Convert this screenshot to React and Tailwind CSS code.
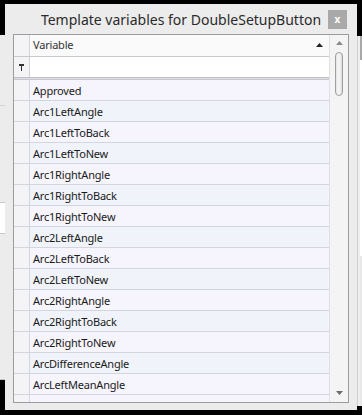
import React from "react";

const rows = [
  "Approved",
  "Arc1LeftAngle",
  "Arc1LeftToBack",
  "Arc1LeftToNew",
  "Arc1RightAngle",
  "Arc1RightToBack",
  "Arc1RightToNew",
  "Arc2LeftAngle",
  "Arc2LeftToBack",
  "Arc2LeftToNew",
  "Arc2RightAngle",
  "Arc2RightToBack",
  "Arc2RightToNew",
  "ArcDifferenceAngle",
  "ArcLeftMeanAngle",
];

const font = { fontFamily: '"Noto Sans", "Open Sans", Arial, sans-serif' };

export default function App() {
  return (
    <div className="relative w-[362px] h-[415px] bg-black overflow-hidden" style={font}>
      {/* windows behind */}
      <div className="absolute left-0 top-[35px] w-[5px] h-[345px] bg-[#ececec] border-b border-[#c8c8c8]">
        <div className="mt-[70px] h-px bg-[#d4d4d4]" />
        <div className="mt-[96px] h-[32px] border-y border-[#c8c8c8] bg-white" />
      </div>
      <div className="absolute left-[357px] top-[36px] w-[5px] h-[370px] bg-[#e4e4e4] flex">
        <div className="w-px h-full bg-[#d0d0d0]" />
        <div className="w-[2px] h-full bg-[#efefef]" />
        <div className="w-[2px] h-full flex flex-col">
          <div className="h-[24px] bg-[#a8a8a8]" />
          <div className="flex-1 bg-white" />
          <div className="h-[150px] bg-[#e8e8e8]" />
        </div>
      </div>

      {/* dialog */}
      <div className="absolute left-[5px] top-[4px] w-[352px] h-[406px] bg-[#ececec] flex flex-col">
        <div className="relative h-[30px] flex items-center justify-center">
          <span className="text-[14px] leading-none text-[#2b2b2b] mt-[1px]">
            Template variables for DoubleSetupButton
          </span>
          <div className="absolute left-[323px] top-[6px] w-[19px] h-[19px] bg-[#a9a9a9] flex items-center justify-center">
            <span className="text-white text-[10px] font-bold leading-none mt-[-2px]">x</span>
          </div>
        </div>

        {/* grid */}
        <div className="mx-[8px] h-[369px] w-[336px] border border-[#9c9c9c] bg-white flex">
          <div className="w-[315px] flex flex-col overflow-hidden">
            {/* header */}
            <div className="h-[22px] shrink-0 flex border-b border-[#c9c9c9] bg-[#fafafa]">
              <div className="w-[16px] border-r border-[#d2d2d8] bg-[#f4f4f6]" />
              <div className="flex-1 flex items-center pl-[3px] pr-[6px]">
                <span className="text-[11px] tracking-[-0.2px] text-[#333] flex-1">Variable</span>
                <svg width="7" height="4" viewBox="0 0 7 4" className="mt-[-1px]">
                  <path d="M3.5 0 L7 4 L0 4 Z" fill="#222" />
                </svg>
              </div>
            </div>
            {/* filter */}
            <div className="h-[21px] shrink-0 flex border-b border-[#c2c2c2] bg-white">
              <div className="w-[16px] border-r border-[#d2d2d8] bg-[#f4f4f6] flex items-center justify-center">
                <svg width="5" height="7" viewBox="0 0 5 7">
                  <path d="M0 0 H5 V2 H3 V7 H2 V2 H0 Z" fill="#333" />
                </svg>
              </div>
              <div className="flex-1" />
            </div>
            <div className="h-[2px] shrink-0 bg-[#dcdce4] border-b border-[#c8c8d0]" />
            {rows.map((r, i) => (
              <div
                key={r}
                className={
                  "h-[21px] shrink-0 flex border-b border-[#d4d6df] " +
                  (i % 2 === 0 ? "bg-[#f6f4fc]" : "bg-[#f0f3f9]")
                }
              >
                <div className="w-[16px] border-r border-[#d4d6df] bg-[#f4f4f7]" />
                <div className="flex-1 flex items-center pl-[3px]">
                  <span className="text-[11px] tracking-[-0.2px] text-[#1a1a1a] leading-none">{r}</span>
                </div>
              </div>
            ))}
            <div className="h-[21px] shrink-0 flex bg-[#f6f4fc]">
              <div className="w-[16px] border-r border-[#d4d6df] bg-[#f4f4f7]" />
              <div className="flex-1" />
            </div>
          </div>
          {/* scrollbar */}
          <div className="w-[19px] border-l border-[#e0e0e0] bg-[#f4f4f4] flex flex-col items-center">
            <svg width="7" height="4" viewBox="0 0 7 4" className="mt-[6px]">
              <path d="M3.5 0 L7 4 L0 4 Z" fill="#8a8a8a" />
            </svg>
            <div className="mt-[7px] w-[8px] h-[44px] rounded-full border border-[#a0a0a0] bg-gradient-to-r from-[#e6e6e6] via-[#f8f8f8] to-[#dcdcdc]" />
            <div className="flex-1" />
            <svg width="7" height="4" viewBox="0 0 7 4" className="mb-[7px]">
              <path d="M0 0 L7 0 L3.5 4 Z" fill="#6a6a6a" />
            </svg>
          </div>
        </div>
      </div>
    </div>
  );
}
